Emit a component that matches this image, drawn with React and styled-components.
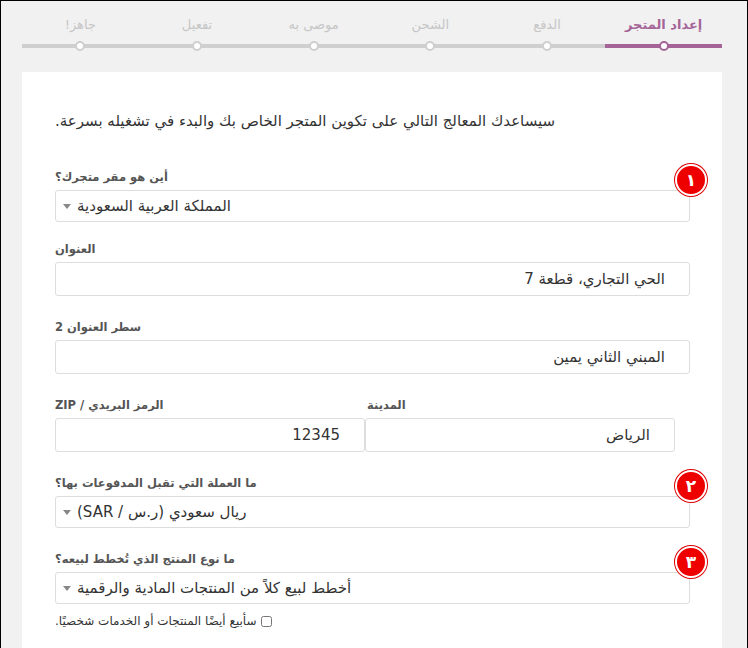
import React from 'react'
import styled, { createGlobalStyle } from 'styled-components'

const Global = createGlobalStyle`
  html, body { margin: 0; padding: 0; background: #f1f1f1; }
  body { font-family: "DejaVu Sans", "Noto Sans", sans-serif; }
`

const Page = styled.div`
  width: 748px;
  height: 648px;
  box-sizing: border-box;
  border: 1px solid #000;
  border-bottom: none;
  overflow: hidden;
  padding: 0 25px 0 21px;
`

const Steps = styled.div`
  display: flex;
  flex-direction: row-reverse;
  height: 71px;
`

const Step = styled.div`
  flex: 1;
  display: flex;
  flex-direction: column;
  align-items: center;
  padding-top: 16px;
  font-size: 13px;
  direction: rtl;
  color: ${p => (p.$active ? '#a46497' : '#c6c6c6')};
  font-weight: ${p => (p.$active ? 'bold' : 'normal')};
`

const Track = styled.div`
  position: relative;
  width: 100%;
  height: 4px;
  margin-top: 12px;
  background: ${p => (p.$active ? '#a46497' : '#cfcfcf')};
`

const Dot = styled.span`
  position: absolute;
  left: 50%;
  top: 50%;
  width: 6px;
  height: 6px;
  margin: -5px 0 0 -5px;
  border-radius: 50%;
  background: #fff;
  border: 2px solid ${p => (p.$active ? '#a46497' : '#cfcfcf')};
`

const Card = styled.div`
  background: #fff;
  padding: 40px 32px 0 33px;
  height: 600px;
`

const Intro = styled.p`
  direction: rtl;
  text-align: left;
  margin: 0 0 40px;
  font-size: 15px;
  color: #333;
  width: 520px;
`

const Field = styled.div`
  position: relative;
  margin-bottom: ${p => p.$mb || 20}px;
`

const Label = styled.div`
  direction: rtl;
  text-align: left;
  font-size: 11.5px;
  font-weight: 600;
  color: #555;
  margin-bottom: 6px;
  padding-left: ${p => p.$pl || 0}px;
  width: max-content;
`

const Select = styled.div`
  height: 30px;
  border: 1px solid #ddd;
  border-radius: 3px;
  display: flex;
  align-items: center;
  padding-left: 7px;
  font-size: 15px;
  color: #333;
  direction: ltr;
  gap: 6px;
  span:last-child { direction: rtl; unicode-bidi: isolate; }
`

const Caret = styled.span`
  width: 0;
  height: 0;
  border-left: 4px solid transparent;
  border-right: 4px solid transparent;
  border-top: 5px solid #888;
`

const Input = styled.div`
  height: 34px;
  border: 1px solid #ddd;
  border-radius: 3px;
  box-sizing: border-box;
  display: flex;
  align-items: center;
  justify-content: flex-start;
  padding-right: 24px;
  font-size: 15px;
  color: #333;
  direction: rtl;
  width: ${p => p.$w || 'auto'};
`

const Row = styled.div`
  display: flex;
  margin-bottom: 24px;
`

const Col = styled.div`
  width: ${p => p.$w}px;
`

const Badge = styled.span`
  position: absolute;
  right: -17px;
  top: -6px;
  width: 28px;
  height: 28px;
  border-radius: 50%;
  background: #ee0000;
  border: 2px solid #fff;
  box-shadow: 0 0 0 1px #d00;
  color: #fff;
  font-size: 17px;
  font-weight: bold;
  display: flex;
  align-items: center;
  justify-content: center;
`

const Check = styled.label`
  display: flex;
  align-items: center;
  gap: 4px;
  font-size: 12px;
  color: #333;
  margin-top: -10px;
  span { direction: rtl; unicode-bidi: isolate; }
  input { margin: 0; width: 11px; height: 11px; }
`

const steps = ['إعداد المتجر', 'الدفع', 'الشحن', 'موصى به', 'تفعيل', 'جاهز!']

export default function App() {
  return (
    <Page>
      <Global />
      <Steps>
        {steps.map((s, i) => (
          <Step key={s} $active={i === 0}>
            <span>{s}</span>
            <Track $active={i === 0}><Dot $active={i === 0} /></Track>
          </Step>
        ))}
      </Steps>
      <Card>
        <Intro>سيساعدك المعالج التالي على تكوين المتجر الخاص بك والبدء في تشغيله بسرعة.</Intro>

        <Field>
          <Label>أين هو مقر متجرك؟</Label>
          <Select><Caret /><span>المملكة العربية السعودية</span></Select>
          <Badge>١</Badge>
        </Field>

        <Field $mb={24}>
          <Label>العنوان</Label>
          <Input>الحي التجاري، قطعة 7</Input>
        </Field>

        <Field $mb={24}>
          <Label>سطر العنوان 2</Label>
          <Input>المبني الثاني يمين</Input>
        </Field>

        <Row>
          <Col $w={310}>
            <Label>الرمز البريدي / ZIP</Label>
            <Input $w="310px">12345</Input>
          </Col>
          <Col $w={310}>
            <Label $pl={2}>المدينة</Label>
            <Input $w="310px">الرياض</Input>
          </Col>
        </Row>

        <Field $mb={24}>
          <Label>ما العملة التي تقبل المدفوعات بها؟</Label>
          <Select><Caret /><span>ريال سعودي (ر.س / SAR)</span></Select>
          <Badge>٢</Badge>
        </Field>

        <Field>
          <Label>ما نوع المنتج الذي تُخطط لبيعه؟</Label>
          <Select><Caret /><span>أخطط لبيع كلاً من المنتجات المادية والرقمية</span></Select>
          <Badge>٣</Badge>
        </Field>

        <Check>
          <span>سأبيع أيضًا المنتجات أو الخدمات شخصيًا.</span>
          <input type="checkbox" />
        </Check>
      </Card>
    </Page>
  )
}
